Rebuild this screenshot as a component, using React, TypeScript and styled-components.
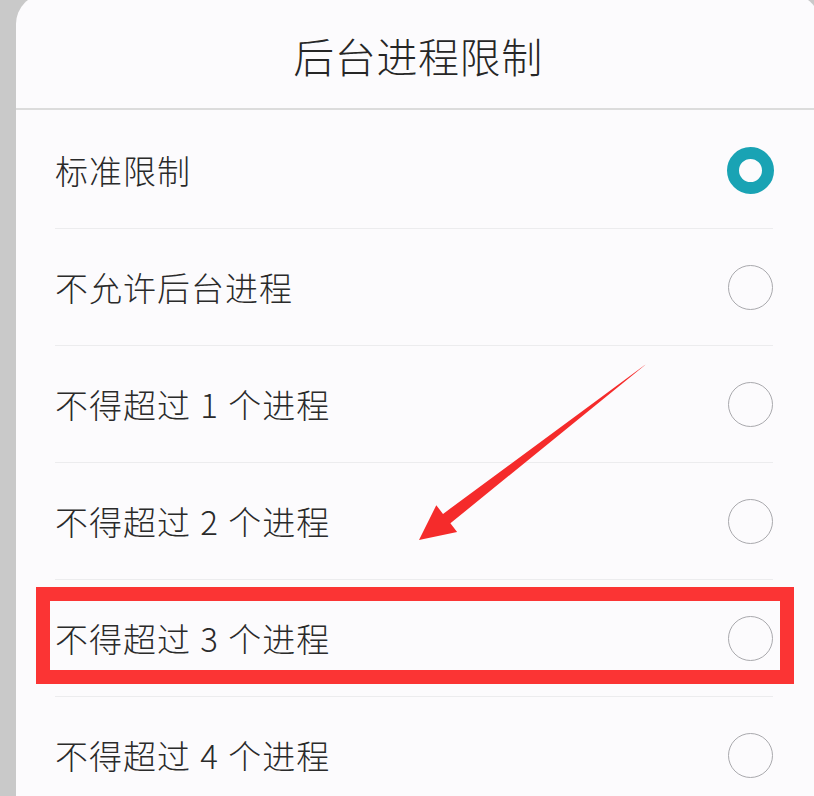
import React from 'react'
import styled, { createGlobalStyle } from 'styled-components'

const GlobalStyle = createGlobalStyle`
  html, body {
    margin: 0;
    padding: 0;
    height: 100%;
    overflow: hidden;
    background: #c9c9c9;
  }
  body {
    font-family: "Noto Sans CJK SC", "Noto Sans", Roboto, sans-serif;
  }
`

const Page = styled.div`
  position: relative;
  width: 814px;
  height: 796px;
  overflow: hidden;
`

const Card = styled.div`
  margin: -6px -6px 0 16px;
  height: 820px;
  background: #fcfbfd;
  border-radius: 30px 30px 0 0;
`

const Header = styled.div`
  height: 106px;
  padding-top: 8px;
  display: flex;
  align-items: center;
  justify-content: center;
  border-bottom: 2px solid #dcdcdc;
  font-size: 41px;
  font-weight: 300;
  color: #262626;
  letter-spacing: 0.6px;
`

const List = styled.div`
  padding-top: 2px;
`

const Row = styled.div<{ $last?: boolean }>`
  position: relative;
  height: 116px;
  margin: 0 47px 0 39px;
  display: flex;
  align-items: center;
  justify-content: space-between;
  border-bottom: 1px solid ${p => (p.$last ? 'transparent' : '#ececee')};
`

const Label = styled.span`
  font-size: 33px;
  font-weight: 300;
  color: #2a2a2a;
  letter-spacing: 1px;
  word-spacing: 1px;
  white-space: pre;
`

const Radio = styled.span<{ $checked?: boolean }>`
  box-sizing: border-box;
  display: block;
  width: ${p => (p.$checked ? 47 : 45)}px;
  height: ${p => (p.$checked ? 47 : 45)}px;
  margin-right: ${p => (p.$checked ? -1 : 0)}px;
  border-radius: 50%;
  border: ${p => (p.$checked ? '12px solid #19a3b4' : '1.5px solid #a9a9ad')};
  background: #fcfbfd;
`

const Highlight = styled.div`
  position: absolute;
  top: 7px;
  left: -19px;
  right: -21px;
  height: 97px;
  box-sizing: border-box;
  border: 14px solid #fb3434;
  pointer-events: none;
`

const Arrow = styled.svg`
  position: absolute;
  left: 0;
  top: 0;
  pointer-events: none;
`

const options = [
  '标准限制',
  '不允许后台进程',
  '不得超过 1 个进程',
  '不得超过 2 个进程',
  '不得超过 3 个进程',
  '不得超过 4 个进程',
]

const App = () => {
  return (
    <Page>
      <GlobalStyle />
      <Card>
        <Header>后台进程限制</Header>
        <List>
          {options.map((o, i) => (
            <Row key={o} $last={i === options.length - 1}>
              <Label>{o}</Label>
              <Radio $checked={i === 0} />
              {i === 4 && <Highlight />}
            </Row>
          ))}
        </List>
      </Card>
      <Arrow width="814" height="796" viewBox="0 0 814 796">
        <polygon
          points="645.5,364.6 644.5,365.4 450.4,523.3 457.1,532 419,540 436.3,505.2 443,513.9"
          fill="#f52b2b"
        />
      </Arrow>
    </Page>
  )
}

export default App
